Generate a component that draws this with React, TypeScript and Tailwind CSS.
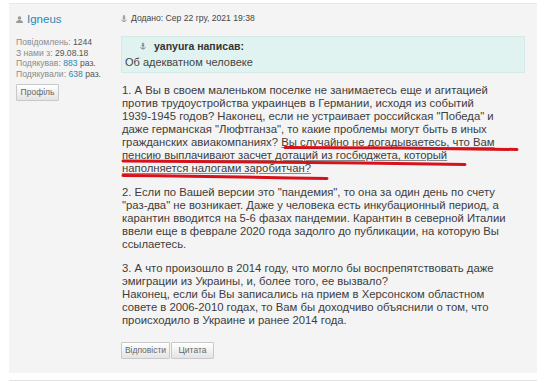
import React from 'react';

const p1 = [
  '1. А Вы в своем маленьком поселке не занимаетесь еще и агитацией',
  'против трудоустройства украинцев в Германии, исходя из событий',
  '1939-1945 годов? Наконец, если не устраивает российская "Победа" и',
  'даже германская "Люфтганза", то какие проблемы могут быть в иных',
];
const p2 = [
  '2. Если по Вашей версии это "пандемия", то она за один день по счету',
  '"раз-два" не возникает. Даже у человека есть инкубационный период, а',
  'карантин вводится на 5-6 фазах пандемии. Карантин в северной Италии',
  'ввели еще в феврале 2020 года задолго до публикации, на которую Вы',
  'ссылаетесь.',
];
const p3 = [
  '3. А что произошло в 2014 году, что могло бы воспрепятствовать даже',
  'эмиграции из Украины, и, более того, ее вызвало?',
  'Наконец, если бы Вы записались на прием в Херсонском областном',
  'совете в 2006-2010 годах, то Вам бы доходчиво объяснили о том, что',
  'происходило в Украине и ранее 2014 года.',
];

function Anchor({ className }: { className?: string }) {
  return (
    <svg viewBox="0 0 8 9" className={className} fill="none" stroke="currentColor" strokeWidth="1">
      <circle cx="4" cy="1.5" r="1" />
      <path d="M4 2.5v6M2 4h4M1 6c0 1.5 1.5 2.5 3 2.5s3-1 3-2.5" />
    </svg>
  );
}

function Lines({ lines }: { lines: string[] }) {
  return (
    <>
      {lines.map((l, i) => (
        <div key={i} className="whitespace-nowrap">
          {l}
        </div>
      ))}
    </>
  );
}

const btn =
  'h-[17px] border border-[#c9c9c9] bg-gradient-to-b from-white to-[#e4e4e4] text-[8.5px] text-[#666] flex items-center justify-center rounded-[1px]';

export default function App() {
  return (
    <div className="relative w-[550px] h-[384px] bg-white pt-[3px] pl-[9px] overflow-hidden" style={{ fontFamily: '"Liberation Sans", Arial, sans-serif' }}>
      <div className="flex w-[528px] h-[370px] bg-[#f4f4f4] border-t border-[#e8e8e8]">
        {/* profile column */}
        <div className="w-[112px] pl-[7px] pt-[8px]">
          <div className="flex items-center gap-[4px]">
            <svg viewBox="0 0 8 8" className="w-[7px] h-[7px] text-[#999]" fill="currentColor">
              <circle cx="4" cy="2.2" r="2" />
              <path d="M0 8c0-2.5 1.8-3.5 4-3.5S8 5.5 8 8z" />
            </svg>
            <span className="text-[11.5px] text-[#2b87b5] leading-[14px]">Igneus</span>
          </div>
          <div className="mt-[11px] text-[8.6px] leading-[10.7px] text-[#8c8c8c]">
            <div>Повідомлень: <span className="text-[#555]">1244</span></div>
            <div>З нами з: <span className="text-[#555]">29.08.18</span></div>
            <div>Подякував: <span className="text-[#2b87b5]">883</span> <span className="text-[#555]">раз.</span></div>
            <div>Подякували: <span className="text-[#2b87b5]">638</span> <span className="text-[#555]">раз.</span></div>
          </div>
          <div className={`${btn} w-[43px] mt-[4px]`}>Профіль</div>
        </div>

        {/* post column */}
        <div className="flex-1 pr-[12px] pt-[8px] text-[#3d3d3d]">
          <div className="flex items-center gap-[4px] text-[8.6px] leading-[12px] text-[#444]">
            <Anchor className="w-[6px] h-[7px] text-[#777]" />
            <span>Додано: Сер 22 гру, 2021 19:38</span>
          </div>
          <div className="mt-[12px] h-[37px] bg-[#e1f3f1] border border-[#d3eae6] pl-[3px] pt-[2px]">
            <div className="flex items-center gap-[8px] pl-[15px] text-[10.5px] font-bold leading-[14px] text-[#333]">
              <Anchor className="w-[6px] h-[8px] text-[#666]" />
              <span>yanyura написав:</span>
            </div>
            <div className="mt-[2px] text-[11px] leading-[14px] text-[#444]">Об адекватном человеке</div>
          </div>

          <div className="mt-[11px] pl-[1px] text-[11.3px] leading-[13px]">
            <Lines lines={p1} />
            <div className="whitespace-nowrap">
              гражданских авиакомпаниях? <span className="underline decoration-[#888]">Вы случайно не догадываетесь, что Вам</span>
            </div>
            <div className="whitespace-nowrap underline decoration-[#888]">пенсию выплачивают засчет дотаций из госбюджета, который</div>
            <div className="whitespace-nowrap">
              <span className="underline decoration-[#888]">наполняется налогами заробитчан?</span>
            </div>
            <div className="mt-[11px]">
              <Lines lines={p2} />
            </div>
            <div className="mt-[11px]">
              <Lines lines={p3} />
            </div>
          </div>

          <div className="mt-[15px] flex gap-[1px]">
            <div className={`${btn} w-[49px]`}>Відповісти</div>
            <div className={`${btn} w-[43px]`}>Цитата</div>
          </div>
        </div>
      </div>
      <div className="mt-[7px] w-[528px] border-t border-[#e2e2e2]" />

      {/* red marker strokes */}
      <svg className="absolute inset-0 pointer-events-none" width="550" height="384" fill="none" stroke="#d8121c" strokeWidth="3" strokeLinecap="round">
        <path d="M285 147.5 Q400 147.5 517 149.5" />
        <path d="M123 161 Q300 162 465 164.5" />
        <path d="M123 175.5 Q230 176.5 327 178.5" />
      </svg>
    </div>
  );
}
